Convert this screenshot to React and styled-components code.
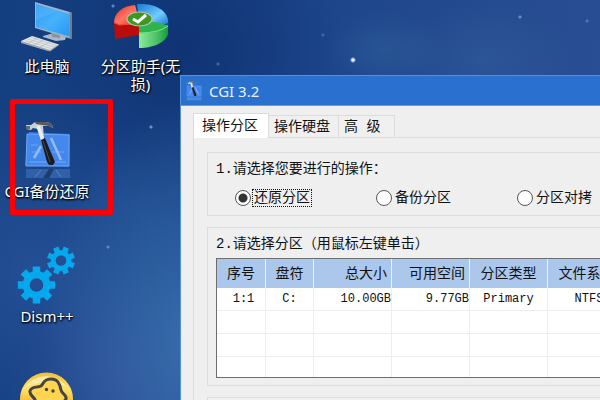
import React, { useState } from "react";
import styled, { createGlobalStyle } from "styled-components";

const GlobalStyle = createGlobalStyle`
  * { box-sizing: border-box; }
  body { margin: 0; font-family: "Noto Sans", "Noto Sans CJK SC", sans-serif; font-size: 14px; }
  button, input { font: inherit; margin: 0; }
`;

const Desktop = styled.main`
  position: relative;
  min-height: 100vh;
  overflow: hidden;
  background:
    radial-gradient(circle at 353px 60px, #f2f6ff 0 1px, #7fa0dc 2px, transparent 3px),
    radial-gradient(circle at 323px 35px, #41669f 0 1px, transparent 2px),
    radial-gradient(circle at 218px 64px, #41669f 0 1px, transparent 2px),
    radial-gradient(circle at 520px 17px, #6d8cc2 0 1px, transparent 2px),
    radial-gradient(circle at 587px 21px, #5273b0 0 1px, transparent 2px),
    radial-gradient(circle at 151px 127px, #6e92ca 0 1px, transparent 2px),
    radial-gradient(circle at 108px 247px, #5c86c4 0 1px, transparent 2px),
    radial-gradient(circle at 113px 6px, #5c86c4 0 1px, transparent 2px),
    radial-gradient(ellipse 90px 60px at 485px 60px, rgba(60, 110, 165, 0.3), transparent),
    radial-gradient(ellipse 60px 40px at 385px 50px, rgba(60, 115, 165, 0.3), transparent),
    radial-gradient(ellipse 150px 240px at 190px 340px, rgba(65, 125, 185, 0.7), transparent),
    radial-gradient(ellipse 110px 110px at 120px 380px, rgba(60, 80, 155, 0.5), transparent),
    radial-gradient(ellipse 150px 170px at 30px 270px, rgba(46, 88, 160, 0.6), transparent),
    radial-gradient(ellipse 160px 170px at 185px 50px, rgba(8, 38, 100, 0.55), transparent),
    linear-gradient(100deg, #133f80 0%, #1c458a 45%, #2c4f94 100%);
`;

const IconGrid = styled.nav`
  display: grid;
  grid-template-columns: 94px 93px;
  grid-template-rows: 120px 125px 125px 30px;
`;

const Shortcut = styled.button`
  grid-column: ${(p) => p.$column};
  display: flex;
  flex-direction: column;
  align-items: center;
  justify-content: flex-start;
  gap: 2px;
  padding: 0;
  border: 0;
  background: none;
  color: #fff;
  font-size: 15px;
  line-height: 18px;
  white-space: nowrap;
  text-shadow: 1px 1px 2px #000, 0 1px 2px #000;
  svg { flex: none; display: block; }
`;

const Highlight = styled.div`
  position: absolute;
  left: 10px;
  top: 99px;
  width: 103px;
  height: 116px;
  border: 5px solid #fd0006;
  border-radius: 2px;
  pointer-events: none;
`;

const AppWindow = styled.section`
  position: absolute;
  left: 180px;
  top: 75px;
  right: -64px;
  border: 1px solid #5590d8;
  background: #efefef;
  color: #111;
`;

const TitleBar = styled.header`
  display: flex;
  align-items: center;
  gap: 7px;
  height: 30px;
  padding-left: 5px;
  border-bottom: 1px solid #6b9bdc;
  background: #2970cf;
  color: #e8f1fd;
`;

const Title = styled.h1`
  margin: 0;
  font-size: 15px;
  font-weight: 400;
  line-height: 20px;
`;

const Body = styled.div`
  padding: 7px 12px 12px;
  font-family: "Liberation Mono", "Noto Sans CJK SC", monospace;
`;

const Tabs = styled.div`
  display: flex;
  align-items: flex-end;
`;

const Tab = styled.button`
  min-width: 56px;
  height: ${(p) => (p.$active ? 25 : 22)}px;
  padding: ${(p) => (p.$active ? "0 10px 0 8px" : "0 8px 0 5px")};
  margin-bottom: ${(p) => (p.$active ? -1 : 0)}px;
  border: 1px solid #dcdcdc;
  border-left-width: ${(p) => (p.$active ? 1 : 0)}px;
  border-bottom: 0;
  background: ${(p) => (p.$active ? "#fff" : "#f0f0f0")};
  color: #111;
  line-height: 20px;
  text-align: left;
  white-space: nowrap;
`;

const Panel = styled.div`
  display: flex;
  flex-direction: column;
  gap: 11px;
  padding: 14px 13px;
  border: 1px solid #dcdcdc;
`;

const Group = styled.section`
  padding: 7px 8px;
  border: 1px solid #dcdcdc;
`;

const Heading = styled.h2`
  margin: 0;
  font-size: 14px;
  font-weight: 400;
  line-height: 18px;
  white-space: nowrap;
`;

const Choices = styled.div`
  display: grid;
  grid-template-columns: repeat(3, 141px);
  height: 20px;
  margin-top: 10px;
  padding-left: 19px;
`;

const Choice = styled.label`
  display: flex;
  align-items: center;
  gap: 1px;
  span {
    height: 18px;
    line-height: 16px;
    padding: 0 1px;
    border: 1px dotted transparent;
  }
  input:checked + span { border-color: #111; }
`;

const Radio = styled.input`
  appearance: none;
  width: 16px;
  height: 16px;
  border: 1px solid #555;
  border-radius: 50%;
  background: ${(p) => (p.checked ? "radial-gradient(circle, #333 0 4px, #fff 5px)" : "#fff")};
`;

const TableFrame = styled.div`
  margin-top: 5px;
  overflow: hidden;
  border: 1px solid #6e6e6e;
  background: #fff;
`;

const Table = styled.table`
  width: 409px;
  table-layout: fixed;
  border-collapse: separate;
  border-spacing: 0;
`;

const Col = styled.col`
  width: ${(p) => p.$width}px;
`;

const HeadCell = styled.th`
  height: 29px;
  padding: 0 ${(p) => (p.$align === "right" ? 4 : 0)}px 0 0;
  border-right: 1px solid #eef2f8;
  background: #abc7eb;
  font-weight: 400;
  line-height: 20px;
  text-align: ${(p) => p.$align};
`;

const Cell = styled.td`
  height: 23px;
  padding: 0 0 0 ${(p) => (p.$indent ? 5 : 0)}px;
  border-right: 1px solid #ededed;
  border-bottom: 1px solid #ededed;
  font-size: 12px;
  line-height: 16px;
  text-align: ${(p) => p.$align};
  tr:last-child > & { height: 20px; border-bottom: 0; }
`;

function gear(cx, cy, outer, root, turn) {
  const steps = [[-0.27, root], [-0.2, outer], [0.2, outer], [0.27, root]];
  const points = [];
  for (let i = 0; i < 8; i++) {
    for (const [d, r] of steps) {
      const a = (i * Math.PI) / 4 + turn + d;
      points.push(`${(cx + r * Math.cos(a)).toFixed(2)},${(cy + r * Math.sin(a)).toFixed(2)}`);
    }
  }
  return `M${points.join("L")}Z`;
}

const hole = (cx, cy, r) => `M${cx - r},${cy}a${r},${r} 0 1 0 ${2 * r},0a${r},${r} 0 1 0 ${-2 * r},0Z`;

const ComputerIcon = () => (
  <svg width="64" height="55" viewBox="15 0 64 55" aria-hidden="true">
    <defs>
      <linearGradient id="screen" x1="0" y1="0" x2="1" y2="1">
        <stop offset="0" stopColor="#2a96ee" />
        <stop offset="0.5" stopColor="#48b1fb" />
        <stop offset="1" stopColor="#2598f4" />
      </linearGradient>
    </defs>
    <path d="M43 36L54 33L66 37L65 40L56 41L43 37Z" fill="#aeb9c4" />
    <path d="M51 31L60 33L60 38L52 37Z" fill="#8593a3" />
    <path d="M35 2L71.500 12.500V39L35 28Z" fill="#9fb4c9" />
    <path d="M69.500 12L72 13V39L69.500 38Z" fill="#6e7c8c" />
    <path d="M36 4L69.500 14V36.500L36 27Z" fill="url(#screen)" />
    <path d="M36 4L58 10.500L36 20Z" fill="#62bdfb" opacity="0.4" />
    <path d="M21 41L32 36L59 44.500L50 51L47 50.500L21 42.500Z" fill="#e3e6e8" />
    <path d="M21 41V43L50 51.500L59 45V44L50 50Z" fill="#98a3ad" />
    <path d="M25 40.500L51 48.500M28 39L54 47M31 37.500L57 45.500M28 43L38 38M34 45L44 40M40 47L50 42" stroke="#b8bec4" strokeWidth="0.700" />
  </svg>
);

const PieIcon = () => (
  <svg width="64" height="55" viewBox="108 0 64 55" aria-hidden="true">
    <defs>
      <linearGradient id="green" x1="0" y1="0" x2="1" y2="0">
        <stop offset="0" stopColor="#8cec98" />
        <stop offset="0.6" stopColor="#4dc268" />
        <stop offset="1" stopColor="#159c36" />
      </linearGradient>
      <linearGradient id="blue" x1="0" y1="0" x2="1" y2="1">
        <stop offset="0" stopColor="#1778d1" />
        <stop offset="0.6" stopColor="#71ccff" />
        <stop offset="1" stopColor="#1c75d1" />
      </linearGradient>
      <linearGradient id="red" x1="0" y1="0" x2="1" y2="1">
        <stop offset="0" stopColor="#e52a20" />
        <stop offset="0.5" stopColor="#ff7564" />
        <stop offset="1" stopColor="#e62520" />
      </linearGradient>
    </defs>
    <path d="M136 4C156 2 168 12 167.500 24V27L138 20Z" fill="#0758aa" />
    <path d="M136 4C156 3 168 12 167 23L160 25L138 19Z" fill="url(#blue)" />
    <path d="M138 30L167 25V34C165 42 153 48 138 48Z" fill="url(#green)" />
    <path d="M138 20L160 23L167 26C161 31 150 34 138 33Z" fill="#2fb44c" />
    <path d="M138 33Q158 33 167 26" fill="none" stroke="#7ae48c" />
    <path d="M113 22L138 24V35L114 39Z" fill="#b90c0b" />
    <path d="M134 5C121 6 113 13 113 23L118 25L139 23Z" fill="url(#red)" />
    <path d="M113 22L118 25L134 24" fill="none" stroke="#f44a37" />
    <ellipse cx="138.500" cy="19" rx="12.500" ry="7" fill="#3d9820" stroke="#b7c0ae" strokeWidth="1.200" />
    <path d="M132 19L137 22L145 15" fill="none" stroke="#fff" strokeWidth="3" />
  </svg>
);

const HammerDrawing = () => (
  <>
    <path d="M29 132L70 134L69 167L25 165Z" fill="#3476d9" />
    <path d="M27 134L69 135L69 166L26 166Z" fill="#4488ee" stroke="#6ba5f7" />
    <path d="M34 158L41 146M51 138L61 160" fill="none" stroke="#b4d2ff" strokeWidth="2.500" opacity="0.7" />
    <path d="M32 152H41M52 152H64M31 145H38M29 162H66" fill="none" stroke="#8fbaff" opacity="0.6" />
    <path d="M26 125L31 125L35 122H45C50 122 53 125 53 128L49 126H43L44 138L41 140L38 129L33 128L31 130L26 129Z" fill="#cbd0d2" />
    <path d="M35 122H45C50 122 53 125 53 128L49 126L42 125L36 124Z" fill="#5a5959" />
    <path d="M26 126H30V129H26Z" fill="#66696b" />
    <path d="M38 126L43 141" stroke="#eceeed" strokeWidth="3.500" />
    <path d="M41 140L45 138L49 148L55 162L53 165H49L47 162Z" fill="#191b1e" />
    <path d="M43 141L50 162" stroke="#4a4c4f" />
  </>
);

const HammerIcon = () => (
  <svg width="64" height="60" viewBox="15 120 64 60" aria-hidden="true">
    <HammerDrawing />
    <path d="M26 169H70V178H26Z" fill="#3c70b8" opacity="0.65" />
    <path d="M35 177L41 170M56 170L61 177" stroke="#81a9dc" opacity="0.5" />
    <path d="M49 169H54L49 178H43Z" fill="#152e53" opacity="0.7" />
  </svg>
);

const SmallHammerIcon = () => (
  <svg width="16" height="20" viewBox="24 120 47 60" aria-hidden="true">
    <HammerDrawing />
    <path d="M26 169H70V178H26Z" fill="#6aa5ef" opacity="0.5" />
  </svg>
);

const GearsIcon = () => (
  <svg width="64" height="60" viewBox="15 245 64 60" aria-hidden="true">
    <g fill="#05a8ec" fillRule="evenodd">
      <path d={gear(36.5, 285, 19, 14, 0) + hole(36.5, 285, 6.8)} />
      <path d={gear(61, 260.5, 14.2, 10.3, Math.PI / 8) + hole(61, 260.5, 5.3)} />
    </g>
  </svg>
);

const GhostIcon = () => (
  <svg width="64" height="60" viewBox="15 370 64 60" aria-hidden="true">
    <defs>
      <linearGradient id="gold" x1="0" y1="0" x2="0" y2="1">
        <stop offset="0" stopColor="#f3bd37" />
        <stop offset="0.3" stopColor="#ffe26c" />
        <stop offset="0.65" stopColor="#f5ae20" />
        <stop offset="1" stopColor="#e08c08" />
      </linearGradient>
    </defs>
    <circle cx="46.500" cy="399" r="26.500" fill="url(#gold)" />
    <path d="M24 388Q44 364 69 388Q47 377 24 388Z" fill="#fff4c4" opacity="0.7" />
    <path d="M36 403C36 397 29 396 30 391C31 386 37 388 41 386C44 383 44 379 51 379C59 379 60 386 61 390C62 394 67 395 66 399C65 402 61 401 60 407C57 414 40 415 36 403Z" fill="#ffd450" stroke="#444440" strokeWidth="3" />
    <circle cx="46.500" cy="389.500" r="1.700" fill="#444440" />
    <circle cx="53" cy="391" r="1.700" fill="#444440" />
  </svg>
);

const actions = ["还原分区", "备份分区", "分区对拷"];
const tabs = ["操作分区", "操作硬盘", "高 级"];

const columns = [
  { name: "序号", width: 49, align: "center", value: "1:1", indent: true },
  { name: "盘符", width: 48, align: "center", value: "C:" },
  { name: "总大小", width: 78, align: "right", value: "10.00GB" },
  { name: "可用空间", width: 78, align: "right", value: "9.77GB" },
  { name: "分区类型", width: 78, align: "center", value: "Primary" },
  { name: "文件系统", width: 78, align: "center", value: "NTFS", indent: true },
];

export default function App() {
  const [action, setAction] = useState(actions[0]);
  const [tab, setTab] = useState(tabs[0]);

  return (
    <Desktop>
      <GlobalStyle />
      <IconGrid aria-label="桌面">
        <Shortcut $column={1}><ComputerIcon />此电脑</Shortcut>
        <Shortcut $column={2}><PieIcon /><span>分区助手(无<br />损)</span></Shortcut>
        <Shortcut $column={1}><HammerIcon />CGI备份还原</Shortcut>
        <Shortcut $column={1}><GearsIcon />Dism++</Shortcut>
        <Shortcut $column={1} aria-label="Ghost"><GhostIcon /></Shortcut>
      </IconGrid>
      <Highlight />

      <AppWindow>
        <TitleBar>
          <SmallHammerIcon />
          <Title>CGI 3.2</Title>
        </TitleBar>
        <Body>
          <Tabs role="tablist">
            {tabs.map((name) => (
              <Tab key={name} role="tab" aria-selected={tab === name} $active={tab === name} onClick={() => setTab(name)}>
                {name}
              </Tab>
            ))}
          </Tabs>
          <Panel role="tabpanel">
            <Group role="radiogroup" aria-labelledby="action-heading">
              <Heading id="action-heading">1.请选择您要进行的操作：</Heading>
              <Choices>
                {actions.map((name) => (
                  <Choice key={name}>
                    <Radio type="radio" name="action" checked={action === name} onChange={() => setAction(name)} />
                    <span>{name}</span>
                  </Choice>
                ))}
              </Choices>
            </Group>
            <Group>
              <Heading id="partition-heading">2.请选择分区（用鼠标左键单击）</Heading>
              <TableFrame>
                <Table aria-labelledby="partition-heading">
                  <colgroup>
                    {columns.map((c) => <Col key={c.name} $width={c.width} />)}
                  </colgroup>
                  <thead>
                    <tr>
                      {columns.map((c) => <HeadCell key={c.name} $align={c.align}>{c.name}</HeadCell>)}
                    </tr>
                  </thead>
                  <tbody>
                    {[0, 1, 2, 3].map((row) => (
                      <tr key={row}>
                        {columns.map((c) => (
                          <Cell key={c.name} $align={c.align} $indent={c.indent}>{row === 0 ? c.value : null}</Cell>
                        ))}
                      </tr>
                    ))}
                  </tbody>
                </Table>
              </TableFrame>
            </Group>
            <Group />
          </Panel>
        </Body>
      </AppWindow>
    </Desktop>
  );
}
